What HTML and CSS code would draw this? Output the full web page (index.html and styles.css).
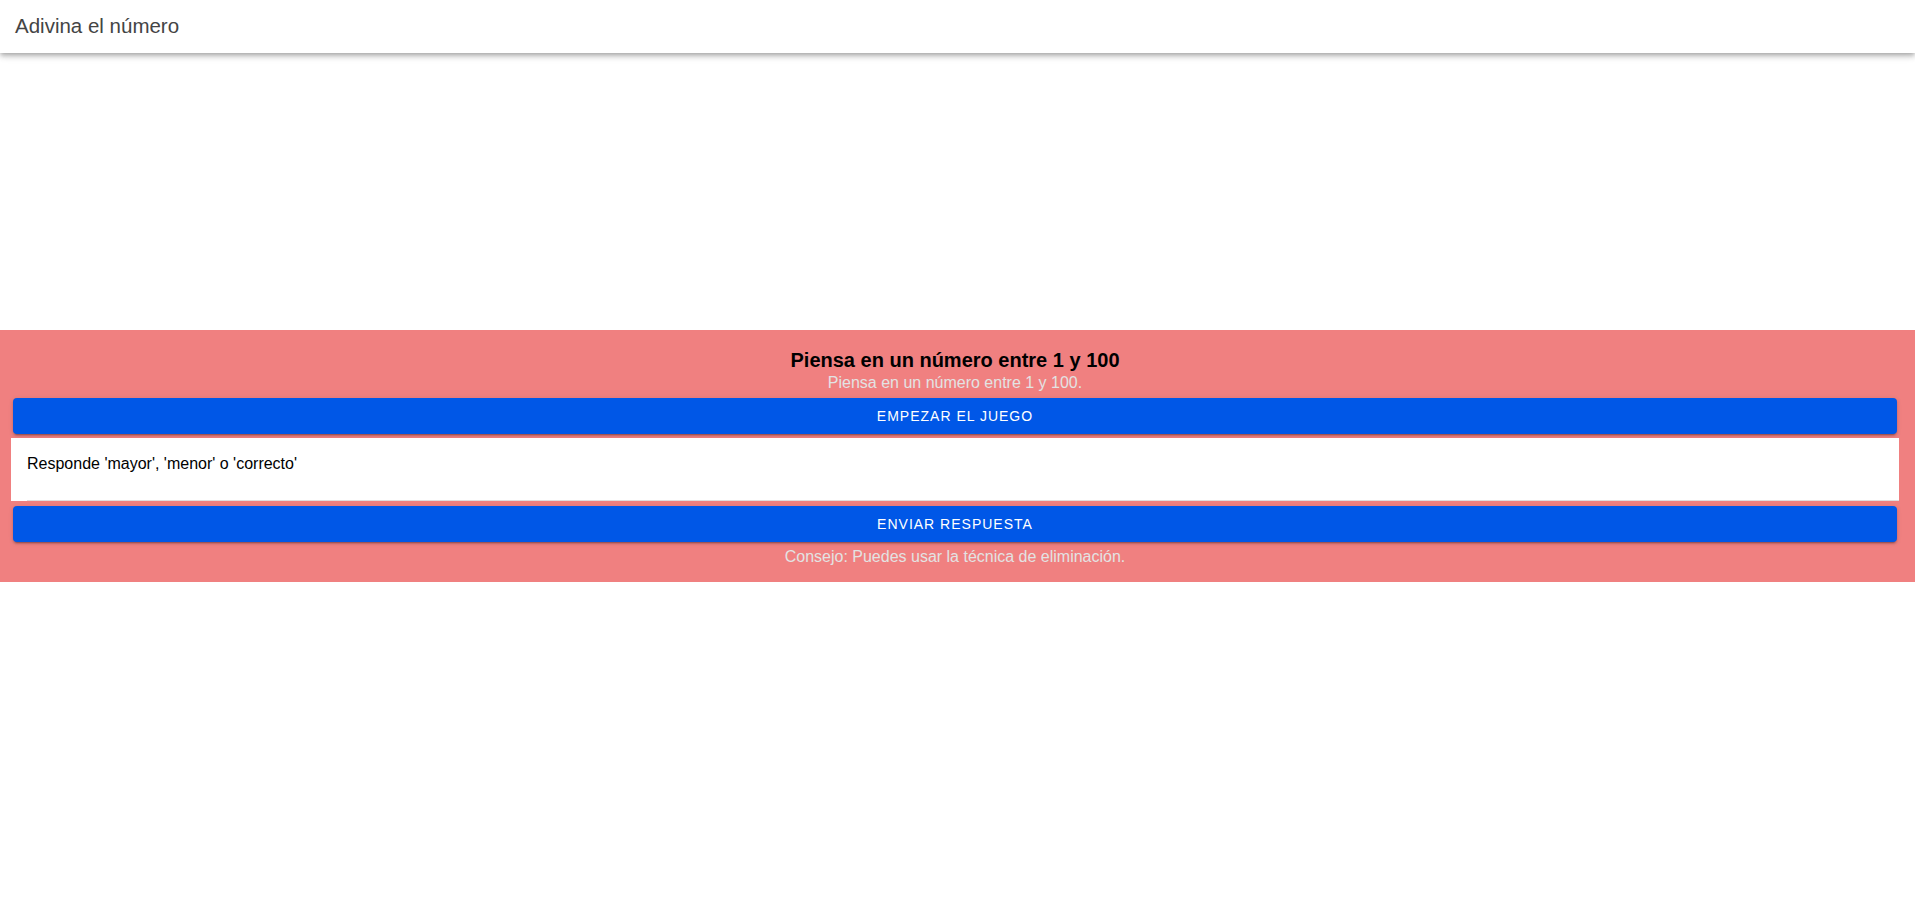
FILE: index.html
```html
<!DOCTYPE html>
<html lang="es">
<head>
<meta charset="utf-8">
<title>Adivina el número</title>
<link rel="stylesheet" href="styles.css">
</head>
<body>
<header class="toolbar">
  <div class="toolbar-title">Adivina el número</div>
</header>
<main class="content">
  <section class="game">
    <h2 class="game-title">Piensa en un número entre 1 y 100</h2>
    <p class="game-sub">Piensa en un número entre 1 y 100.</p>
    <button class="btn">Empezar el juego</button>
    <div class="item">
      <div class="item-inner">
        <input class="item-input" type="text" placeholder="Responde 'mayor', 'menor' o 'correcto'">
      </div>
    </div>
    <button class="btn btn-second">Enviar respuesta</button>
    <p class="game-tip">Consejo: Puedes usar la técnica de eliminación.</p>
  </section>
</main>
</body>
</html>
```

FILE: styles.css
```css
html, body {
  margin: 0;
  padding: 0;
  background: #ffffff;
  font-family: "Liberation Sans", Arial, sans-serif;
}

.toolbar {
  height: 53px;
  display: flex;
  align-items: center;
  padding: 0 15px;
  background: #ffffff;
  box-shadow: 0 2px 4px -1px rgba(0,0,0,0.2), 0 4px 5px 0 rgba(0,0,0,0.14), 0 1px 10px 0 rgba(0,0,0,0.12);
  position: relative;
  z-index: 2;
}

.toolbar-title {
  font-size: 20.5px;
  color: #444444;
  padding-bottom: 2px;
}

.content {
  padding-top: 277px;
}

.game {
  background: #f08080;
  padding: 19px 16px 16px 11px;
  display: flex;
  flex-direction: column;
  text-align: center;
}

.game-title {
  margin: 0;
  font-size: 20px;
  font-weight: bold;
  color: #000000;
  line-height: 23px;
}

.game-sub,
.game-tip {
  margin: 0;
  font-size: 16px;
  line-height: 18px;
  color: #e3e3e3;
}

.game-sub {
  margin-top: 2px;
}

.btn {
  margin: 6px 2px 0;
  height: 36px;
  border: none;
  border-radius: 4px;
  background: #0057e7;
  color: #ffffff;
  font-family: "Liberation Sans", Arial, sans-serif;
  font-size: 14px;
  letter-spacing: 1px;
  text-transform: uppercase;
  box-shadow: 0 3px 1px -2px rgba(0,0,0,0.2), 0 2px 2px 0 rgba(0,0,0,0.14), 0 1px 5px 0 rgba(0,0,0,0.12);
}

.btn-second {
  margin-top: 5px;
}

.item {
  margin-top: 4px;
  background: #ffffff;
  padding-left: 16px;
}

.item-inner {
  height: 62px;
  border-bottom: 1px solid #dedede;
  display: flex;
  align-items: flex-start;
}

.item-input {
  border: none;
  outline: none;
  background: transparent;
  width: 100%;
  margin: 0;
  padding: 17px 0 0;
  font-family: "Liberation Sans", Arial, sans-serif;
  font-size: 16px;
  line-height: 18px;
  color: #000000;
}

.item-input::placeholder {
  color: #000000;
  opacity: 1;
}

.game-tip {
  margin-top: 6px;
}
```
